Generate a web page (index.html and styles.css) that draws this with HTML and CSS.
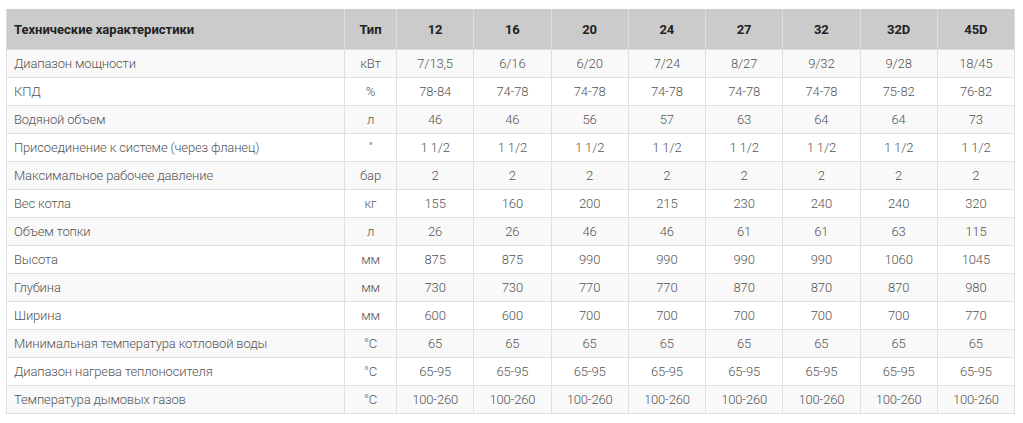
FILE: index.html
```html
<!DOCTYPE html>
<html lang="ru">
<head>
<meta charset="utf-8">
<link rel="stylesheet" href="styles.css">
</head>
<body>
<div class="wrap">
<table class="specs">
<colgroup>
<col class="c-name"><col class="c-type">
<col class="c-val"><col class="c-val"><col class="c-val"><col class="c-val"><col class="c-val"><col class="c-val"><col class="c-val"><col class="c-val">
</colgroup>
<thead>
<tr><th class="name">Технические характеристики</th><th>Тип</th><th>12</th><th>16</th><th>20</th><th>24</th><th>27</th><th>32</th><th>32D</th><th>45D</th></tr>
</thead>
<tbody>
<tr><td class="name">Диапазон мощности</td><td>кВт</td><td>7/13,5</td><td>6/16</td><td>6/20</td><td>7/24</td><td>8/27</td><td>9/32</td><td>9/28</td><td>18/45</td></tr>
<tr><td class="name">КПД</td><td>%</td><td>78-84</td><td>74-78</td><td>74-78</td><td>74-78</td><td>74-78</td><td>74-78</td><td>75-82</td><td>76-82</td></tr>
<tr><td class="name">Водяной объем</td><td>л</td><td>46</td><td>46</td><td>56</td><td>57</td><td>63</td><td>64</td><td>64</td><td>73</td></tr>
<tr><td class="name">Присоединение к системе (через фланец)</td><td>"</td><td>1 1/2</td><td>1 1/2</td><td>1 1/2</td><td>1 1/2</td><td>1 1/2</td><td>1 1/2</td><td>1 1/2</td><td>1 1/2</td></tr>
<tr><td class="name">Максимальное рабочее давление</td><td>бар</td><td>2</td><td>2</td><td>2</td><td>2</td><td>2</td><td>2</td><td>2</td><td>2</td></tr>
<tr><td class="name">Вес котла</td><td>кг</td><td>155</td><td>160</td><td>200</td><td>215</td><td>230</td><td>240</td><td>240</td><td>320</td></tr>
<tr><td class="name">Объем топки</td><td>л</td><td>26</td><td>26</td><td>46</td><td>46</td><td>61</td><td>61</td><td>63</td><td>115</td></tr>
<tr><td class="name">Высота</td><td>мм</td><td>875</td><td>875</td><td>990</td><td>990</td><td>990</td><td>990</td><td>1060</td><td>1045</td></tr>
<tr><td class="name">Глубина</td><td>мм</td><td>730</td><td>730</td><td>770</td><td>770</td><td>870</td><td>870</td><td>870</td><td>980</td></tr>
<tr><td class="name">Ширина</td><td>мм</td><td>600</td><td>600</td><td>700</td><td>700</td><td>700</td><td>700</td><td>700</td><td>770</td></tr>
<tr><td class="name">Минимальная температура котловой воды</td><td>°C</td><td>65</td><td>65</td><td>65</td><td>65</td><td>65</td><td>65</td><td>65</td><td>65</td></tr>
<tr><td class="name">Диапазон нагрева теплоносителя</td><td>°C</td><td>65-95</td><td>65-95</td><td>65-95</td><td>65-95</td><td>65-95</td><td>65-95</td><td>65-95</td><td>65-95</td></tr>
<tr><td class="name">Температура дымовых газов</td><td>°C</td><td>100-260</td><td>100-260</td><td>100-260</td><td>100-260</td><td>100-260</td><td>100-260</td><td>100-260</td><td>100-260</td></tr>
</tbody>
</table>
</div>
</body>
</html>
```
FILE: styles.css
```css
html, body {
  margin: 0;
  padding: 0;
  background: #fff;
}
.wrap {
  padding: 9px 8px 0 6px;
}
.specs {
  width: 1009px;
  border-collapse: collapse;
  table-layout: fixed;
  font-family: Roboto, "Liberation Sans", sans-serif;
  font-size: 13px;
  font-weight: 300;
  color: #555;
}
.c-name { width: 338px; }
.c-type { width: 52px; }
.specs th {
  height: 40px;
  padding: 0 7px;
  background: #cbcbcb;
  color: #222;
  font-weight: 700;
  text-align: center;
  border: 1px solid #dcdcdc;
  border-top: none;
}
.specs td {
  height: 27px;
  padding: 0 7px;
  text-align: center;
  border: 1px solid #e0e0e0;
  white-space: nowrap;
  letter-spacing: -0.15px;
}
.specs th.name, .specs td.name {
  text-align: left;
}
.specs tbody tr:nth-child(odd) td {
  background: #f9f9f9;
}
.specs tbody tr:nth-child(even) td {
  background: #fff;
}
```
